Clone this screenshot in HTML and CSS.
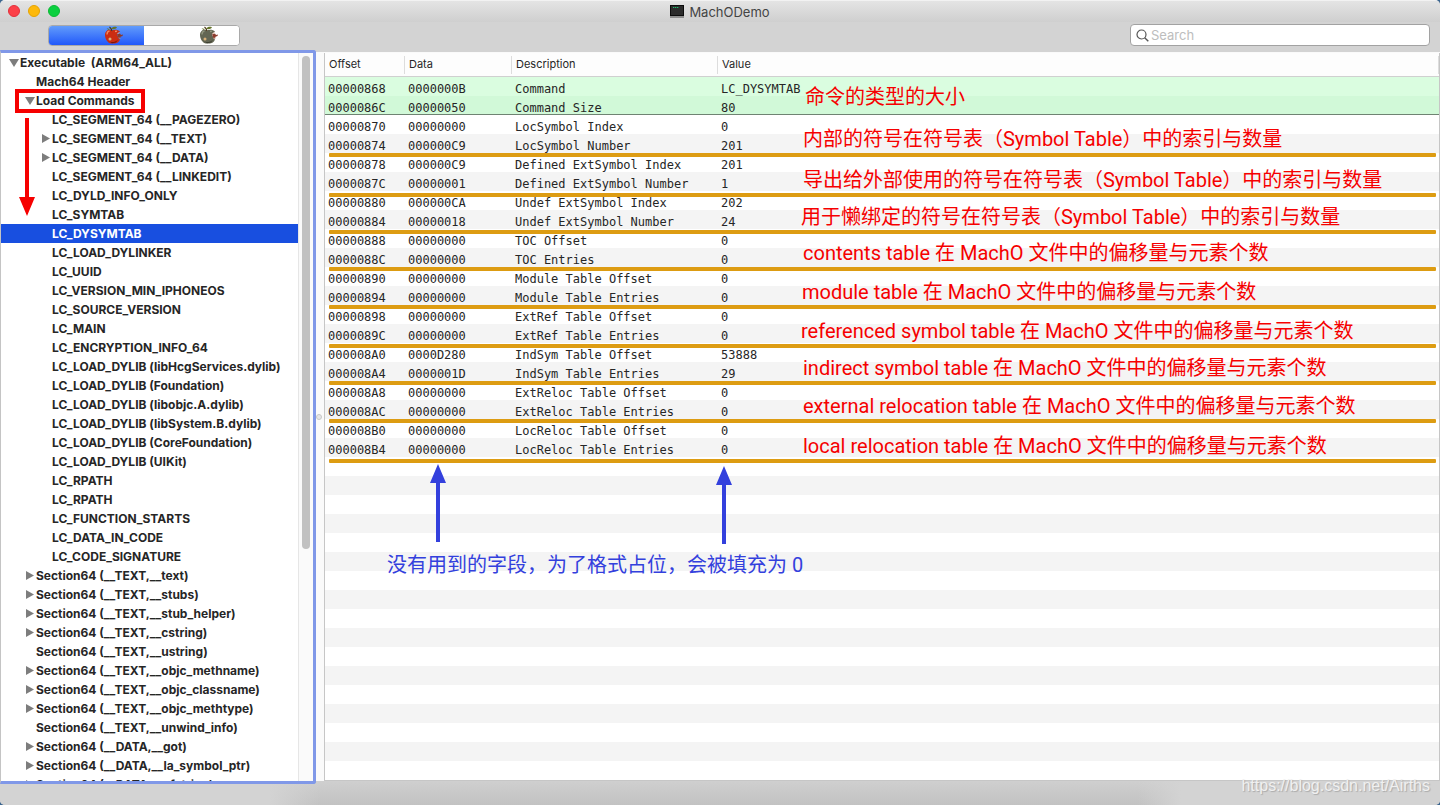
FILE: index.html
```
<!DOCTYPE html>
<html lang="zh-CN">
<head>
<meta charset="utf-8">
<title>MachODemo</title>
<link rel="stylesheet" href="styles.css">
</head>
<body>
<div class="window">
  <header class="titlebar">
    <div class="lights">
      <button class="light close" aria-label="Close"></button>
      <button class="light minimize" aria-label="Minimize"></button>
      <button class="light expand" aria-label="Zoom"></button>
    </div>
    <h1 class="title">
      <svg width="14" height="13" viewBox="0 0 14 13" aria-hidden="true"><path d="M0 0h14v13H0z" fill="#8f8f8f"/><path d="M0 0h14v11H0z" fill="#0c0c0c"/><path d="M1 1h12v9H1z" fill="#2b2b2b"/><path d="M3 2.500h1.300M5 2.500h1.300M7 2.500h1.300" stroke="#20c070"/></svg>
      MachODemo
    </h1>
  </header>
  <div class="toolbar">
    <div class="segments">
      <button class="segment active" aria-label="RAW view"><svg class="apple" viewBox="0 0 20 18"><use href="#apple"/></svg></button>
      <button class="segment muted" aria-label="RVA view"><svg class="apple" viewBox="0 0 20 18"><use href="#apple"/></svg></button>
    </div>
    <label class="search">
      <svg width="13" height="13" viewBox="0 0 13 13" aria-hidden="true"><circle cx="5.500" cy="5.500" r="4.500" fill="none" stroke="#555" stroke-width="1.200"/><path d="M8.700 8.700l3.600 3.600" stroke="#555" stroke-width="1.400"/></svg>
      <input type="search" placeholder="Search" aria-label="Search">
    </label>
  </div>
  <main class="main">
    <nav class="sidebar">
      <ul class="tree" id="tree"></ul>
      <div class="scroll"><div class="thumb"></div></div>
      <div class="mark-box"></div>
      <svg class="mark-arrow" width="16" height="100" viewBox="0 0 16 100"><path d="M6 0h4v79h6L8 98 0 79h6z" fill="#f60000"/></svg>
    </nav>
    <div class="splitter"><span class="grip"></span></div>
    <section class="detail">
      <table class="fields">
        <colgroup><col class="c-offset"><col class="c-data"><col class="c-desc"><col></colgroup>
        <thead><tr><th>Offset</th><th>Data</th><th>Description</th><th>Value</th></tr></thead>
        <tbody id="rows"></tbody>
      </table>
      <div class="rule r1"></div><div class="rule r2"></div><div class="rule r3"></div>
      <div class="rule r4"></div><div class="rule r5"></div><div class="rule r6"></div>
      <div class="rule r7"></div><div class="rule r8"></div><div class="rule r9"></div>
      <p class="note n0">命令的类型的大小</p>
      <p class="note n1">内部的符号在符号表（Symbol Table）中的索引与数量</p>
      <p class="note n2">导出给外部使用的符号在符号表（Symbol Table）中的索引与数量</p>
      <p class="note n3">用于懒绑定的符号在符号表（Symbol Table）中的索引与数量</p>
      <p class="note n4">contents table 在 MachO 文件中的偏移量与元素个数</p>
      <p class="note n5">module table 在 MachO 文件中的偏移量与元素个数</p>
      <p class="note n6">referenced symbol table 在 MachO 文件中的偏移量与元素个数</p>
      <p class="note n7">indirect symbol table 在 MachO 文件中的偏移量与元素个数</p>
      <p class="note n8">external relocation table 在 MachO 文件中的偏移量与元素个数</p>
      <p class="note n9">local relocation table 在 MachO 文件中的偏移量与元素个数</p>
      <svg class="up a1" width="16" height="78" viewBox="0 0 16 78"><path d="M8 0l8 19h-6v59H6V19H0z" fill="#3340dd"/></svg>
      <svg class="up a2" width="16" height="78" viewBox="0 0 16 78"><path d="M8 0l8 19h-6v59H6V19H0z" fill="#3340dd"/></svg>
      <p class="note blue">没有用到的字段，为了格式占位，会被填充为 0</p>
    </section>
  </main>
  <footer class="footer"><span class="watermark">https://blog.csdn.net/Airths</span></footer>
</div>
<svg class="defs" width="0" height="0" aria-hidden="true">
  <symbol id="apple" viewBox="0 0 20 18">
    <path class="flesh" d="M8 4.500C5 2.500 1 4.500 1 9c0 4 3 8.500 6 8.500 2 0 3 .3 5-.2 2-.3 3-1.800 4-3.800l-1.500-1 .5-2-2-.5.500-2.500L16 5.500C14 3.500 10 3.500 8 4.500z"/>
    <path class="shine" d="M3 8.500c0-2 1-3.300 2.500-3.500M11 5.500l2-.3" stroke-width="1.300" fill="none"/>
    <path class="shade" d="M4 14.500c2 2 7 2.500 10-1l-2 3-4 .8z"/>
    <path d="M8 5C7.500 3 7 2 5.500 1" stroke="#4a3518" stroke-width="1.200" fill="none"/>
    <path d="M7 2.500C9 .5 11 .5 13 1.200 11.500 3.500 9 3.500 7 2.500zM6 3L2.500 2.300 4.500 4z" fill="#66752b"/>
    <path d="M13 8.500l3-1 1 1.500 2-.5-.5 1.500-2 .8-.5 2-1.800-.8z" fill="#8c3b2c"/>
    <path d="M13.500 7.500l2-.8M15 11.500l1 1.200" stroke="#d9a890" fill="none"/>
    <circle cx="6" cy="13" r="1.500" fill="#d8b078"/>
  </symbol>
</svg>
<script src="app.js"></script>
</body>
</html>
```
FILE: styles.css
```
* { box-sizing: border-box; }
body { margin: 0; background: #3c6690; font-family: Inter, "Noto Sans CJK SC", sans-serif; color: #262626; }
button { border: 0; padding: 0; }
.window { display: flex; flex-direction: column; height: 100vh; overflow: hidden; border-radius: 5px; background: #d3d3d3; }
.titlebar { position: relative; flex: none; height: 22px; display: flex; align-items: center; justify-content: center; background: linear-gradient(#e4e4e4, #cfcfcf); border-top: 1px solid #f2f2f2; }
.lights { position: absolute; left: 8px; top: 4px; display: flex; gap: 8px; }
.light { width: 12px; height: 12px; border-radius: 50%; }
.close { background: #fc4048; border: 1px solid #e2303b; }
.minimize { background: #fdb90c; border: 1px solid #e5a302; }
.expand { background: #0bd03f; border: 1px solid #0bb834; }
.title { margin: 0; display: flex; align-items: center; gap: 5px; font-size: 13px; line-height: 20px; font-weight: 400; color: #444; }
.toolbar { flex: none; height: 30px; padding: 2px 10px 6px 48px; display: flex; justify-content: space-between; align-items: center; }
.segments { display: flex; width: 192px; height: 21px; border-radius: 4px; overflow: hidden; border: 1px solid #a9a9a9; background: #fff; }
.segment { flex: 1; display: flex; align-items: center; justify-content: flex-end; padding-right: 20px; background: #fff; }
.active { background: linear-gradient(#629cfb, #2158fa); }
.apple { width: 20px; height: 18px; --flesh: #cb2c12; --shine: #f08a60; --shade: #7a1508; }
.muted .apple { --flesh: #636653; --shine: #92967e; --shade: #3e4032; }
.flesh { fill: var(--flesh); }
.shine { stroke: var(--shine); }
.shade { fill: var(--shade); }
.search { display: flex; align-items: center; gap: 2px; width: 300px; height: 22px; padding: 0 5px; border: 1px solid #a2a2a2; border-radius: 4px; background: #fff; }
.search svg { flex: none; }
.search input { flex: 1; min-width: 0; border: 0; padding: 0; outline: 0; background: none; font: 13px/18px Inter, sans-serif; }
.search input::placeholder { color: #bdbdbd; }
.main { flex: 1; min-height: 0; display: flex; background: #fafafa; }
.sidebar { position: relative; flex: none; width: 316px; margin: -2px 0 -3px; border: 3px solid #8098e8; border-left: 1px solid #c4c4c4; border-radius: 0 3px 3px 0; display: flex; background: #fff; z-index: 1; }
.tree { flex: 1; margin: 0; padding: 0; list-style: none; overflow: hidden; font-size: 12px; line-height: 19px; font-weight: 700; white-space: pre; }
.tree li { height: 19px; display: flex; align-items: center; }
.d0 { padding-left: 8px; }
.d1 { padding-left: 24px; }
.d2 { padding-left: 40px; }
.tree .selected { background: #184fe0; color: #fff; }
.arrow { flex: none; width: 11px; height: 9px; fill: #7d7d7d; }
.scroll { flex: none; width: 15px; padding: 3px; border-left: 1px solid #e6e6e6; background: #fafafa; }
.thumb { width: 8px; height: 493px; border-radius: 4px; background: #c1c1c1; }
.mark-box { position: absolute; left: 14px; top: 36px; width: 130px; height: 24px; border: 4px solid #f60000; }
.mark-arrow { position: absolute; left: 18px; top: 65px; }
.splitter { flex: none; width: 8px; display: flex; align-items: center; }
.grip { width: 6px; height: 6px; border: 1px solid #c8c8c8; border-radius: 50%; background: #e6e6e6; }
.detail { position: relative; flex: 1; min-width: 0; margin-top: 1px; border: 1px solid #c6c6c6; border-top: 0; background: repeating-linear-gradient(#fff 0 19px, #f4f4f4 19px 38px) 0 24px; overflow: hidden; }
.fields { width: 100%; table-layout: fixed; border-collapse: separate; border-spacing: 0; }
.c-offset { width: 80px; }
.c-data { width: 107px; }
.c-desc { width: 206px; }
.fields th { height: 24px; padding: 0 0 2px 4px; border-bottom: 1px solid #d0d0d0; background: linear-gradient(#ddd, #ddd) right center / 1px 18px no-repeat #fdfdfd; font-size: 11px; line-height: 18px; font-weight: 400; text-align: left; }
.fields td { height: 19px; padding: 5px 0 0 3px; font: 12px/14px "DejaVu Sans Mono", monospace; white-space: nowrap; }
.fields .head td { background: #dafde0; }
.fields .head + .head td { background: #d1f9d8; box-shadow: inset 0 -1px #6f8372; }
.rule { position: absolute; left: 4px; right: 3px; height: 4px; border-radius: 1px; background: #dd9c12; }
.r1 { top: 100px; }
.r2 { top: 140px; }
.r3 { top: 177px; }
.r4 { top: 214px; }
.r5 { top: 252px; }
.r6 { top: 291px; }
.r7 { top: 328px; }
.r8 { top: 366px; }
.r9 { top: 406px; }
.note { position: absolute; margin: 0; font: 20px/28px Roboto, "Noto Sans CJK SC", sans-serif; white-space: nowrap; color: #f60000; }
.n0 { left: 480px; top: 30px; }
.n1 { left: 478px; top: 72px; }
.n2 { left: 478px; top: 113px; }
.n3 { left: 476px; top: 150px; }
.n4 { left: 478px; top: 186px; }
.n5 { left: 477px; top: 225px; }
.n6 { left: 476px; top: 264px; }
.n7 { left: 478px; top: 301px; }
.n8 { left: 478px; top: 339px; }
.n9 { left: 478px; top: 379px; }
.blue { left: 62px; top: 498px; color: #3340dd; }
.up { position: absolute; }
.a1 { left: 105px; top: 411px; }
.a2 { left: 391px; top: 413px; }
.footer { flex: none; height: 24px; padding-right: 10px; display: flex; justify-content: flex-end; background: linear-gradient(90deg, #d3d3d3 270px, transparent 320px 79%, #d3d3d3 82%), linear-gradient(#cfcfcf, #c2c2c2); }
.watermark { position: relative; z-index: 2; margin-top: -4px; font: 16px/18px "Liberation Sans", sans-serif; color: #f0f0f0; text-shadow: 1px 1px 1px #aaa; }
.defs { position: absolute; }
```
FILE: app.js
```
const tree = [
  [0, "v", "Executable  (ARM64_ALL)"], [1, "", "Mach64 Header"], [1, "v", "Load Commands"],
  [2, "", "LC_SEGMENT_64 (__PAGEZERO)"], [2, ">", "LC_SEGMENT_64 (__TEXT)"], [2, ">", "LC_SEGMENT_64 (__DATA)"],
  [2, "", "LC_SEGMENT_64 (__LINKEDIT)"], [2, "", "LC_DYLD_INFO_ONLY"], [2, "", "LC_SYMTAB"], [2, "", "LC_DYSYMTAB"],
  [2, "", "LC_LOAD_DYLINKER"], [2, "", "LC_UUID"], [2, "", "LC_VERSION_MIN_IPHONEOS"], [2, "", "LC_SOURCE_VERSION"],
  [2, "", "LC_MAIN"], [2, "", "LC_ENCRYPTION_INFO_64"], [2, "", "LC_LOAD_DYLIB (libHcgServices.dylib)"],
  [2, "", "LC_LOAD_DYLIB (Foundation)"], [2, "", "LC_LOAD_DYLIB (libobjc.A.dylib)"],
  [2, "", "LC_LOAD_DYLIB (libSystem.B.dylib)"], [2, "", "LC_LOAD_DYLIB (CoreFoundation)"], [2, "", "LC_LOAD_DYLIB (UIKit)"],
  [2, "", "LC_RPATH"], [2, "", "LC_RPATH"], [2, "", "LC_FUNCTION_STARTS"], [2, "", "LC_DATA_IN_CODE"], [2, "", "LC_CODE_SIGNATURE"],
  [1, ">", "Section64 (__TEXT,__text)"], [1, ">", "Section64 (__TEXT,__stubs)"], [1, ">", "Section64 (__TEXT,__stub_helper)"],
  [1, ">", "Section64 (__TEXT,__cstring)"], [1, "", "Section64 (__TEXT,__ustring)"], [1, ">", "Section64 (__TEXT,__objc_methname)"],
  [1, ">", "Section64 (__TEXT,__objc_classname)"], [1, ">", "Section64 (__TEXT,__objc_methtype)"], [1, "", "Section64 (__TEXT,__unwind_info)"],
  [1, ">", "Section64 (__DATA,__got)"], [1, ">", "Section64 (__DATA,__la_symbol_ptr)"], [1, ">", "Section64 (__DATA,__cfstring)"]
];
const shapes = { "v": "M0 1h10L5 9z", ">": "M1 0v9l8-4.500z", "": "" };
document.getElementById("tree").innerHTML = tree.map(([depth, arrow, label]) =>
  `<li class="d${depth}${label === "LC_DYSYMTAB" ? " selected" : ""}"><svg class="arrow" viewBox="0 0 11 9"><path d="${shapes[arrow]}"/></svg><span>${label}</span></li>`).join("");

const rows = [
  ["00000868", "0000000B", "Command", "LC_DYSYMTAB"], ["0000086C", "00000050", "Command Size", "80"],
  ["00000870", "00000000", "LocSymbol Index", "0"], ["00000874", "000000C9", "LocSymbol Number", "201"],
  ["00000878", "000000C9", "Defined ExtSymbol Index", "201"], ["0000087C", "00000001", "Defined ExtSymbol Number", "1"],
  ["00000880", "000000CA", "Undef ExtSymbol Index", "202"], ["00000884", "00000018", "Undef ExtSymbol Number", "24"],
  ["00000888", "00000000", "TOC Offset", "0"], ["0000088C", "00000000", "TOC Entries", "0"],
  ["00000890", "00000000", "Module Table Offset", "0"], ["00000894", "00000000", "Module Table Entries", "0"],
  ["00000898", "00000000", "ExtRef Table Offset", "0"], ["0000089C", "00000000", "ExtRef Table Entries", "0"],
  ["000008A0", "0000D280", "IndSym Table Offset", "53888"], ["000008A4", "0000001D", "IndSym Table Entries", "29"],
  ["000008A8", "00000000", "ExtReloc Table Offset", "0"], ["000008AC", "00000000", "ExtReloc Table Entries", "0"],
  ["000008B0", "00000000", "LocReloc Table Offset", "0"], ["000008B4", "00000000", "LocReloc Table Entries", "0"]
];
document.getElementById("rows").innerHTML = rows.map((cells, i) =>
  `<tr${i < 2 ? ' class="head"' : ""}>${cells.map(c => `<td>${c}</td>`).join("")}</tr>`).join("");
```
